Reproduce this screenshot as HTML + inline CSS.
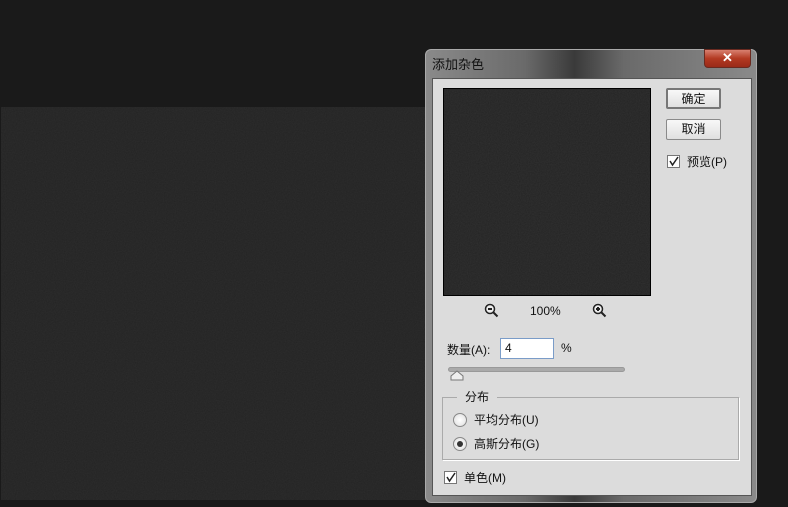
<!DOCTYPE html>
<html><head><meta charset="utf-8"><style>
*{margin:0;padding:0;box-sizing:border-box}
body{width:788px;height:507px;background:#1a1a1a;position:relative;overflow:hidden;font-family:"Liberation Sans","Noto Sans CJK SC",sans-serif;font-size:12px;color:#111}
.a{position:absolute}
.canvas{left:1px;top:107px;width:425px;height:393px;background:#232323}
.dlg{left:425px;top:49px;width:332px;height:454px;border-radius:6px;border:1px solid #aaa;background:linear-gradient(90deg,#8a8a8a,#6a6a6a 30%,#3a3a3a 45%,#6a6a6a 60%,#8a8a8a)}
.title{left:432px;top:54px;font-size:13px;color:#111}
.close{left:704px;top:49px;width:47px;height:19px;border-radius:0 0 4px 4px;background:linear-gradient(#d88070,#b33a22 50%,#9a2a18);border:1px solid #6a2a20;color:#fff;font-weight:bold;text-align:center;line-height:16px;font-size:13px}
.panel{left:432px;top:78px;width:320px;height:418px;background:#dcdcdc;border:1px solid #555}
.prev{left:443px;top:88px;width:208px;height:208px;background:#232323;border:1px solid #000}
.btn{width:55px;height:21px;background:linear-gradient(#f8f8f8,#e0e0e0);border:1px solid #8a8a8a;border-radius:2px;text-align:center;line-height:19px;font-size:12px}
.cb{width:13px;height:13px;border:1px solid #777;background:#fff}
.rd{width:14px;height:14px;border:1px solid #888;border-radius:50%;background:radial-gradient(#fff,#ddd)}
</style></head><body>
<div class="a canvas"><svg width="425" height="393"><filter id="n"><feTurbulence type="fractalNoise" baseFrequency="0.9" numOctaves="2"/><feColorMatrix type="matrix" values="0 0 0 0 0.2 0 0 0 0 0.2 0 0 0 0 0.2 0 0 0 0.5 0"/></filter><rect width="425" height="393" filter="url(#n)" opacity=".25"/></svg></div>
<div class="a dlg"></div>
<div class="a title">添加杂色</div>
<div class="a close">✕</div>
<div class="a panel"></div>
<div class="a prev"><svg width="206" height="206"><rect width="206" height="206" filter="url(#n)" opacity=".35"/></svg></div>
<div class="a btn" style="left:666px;top:88px;border:2px solid #777">确定</div>
<div class="a btn" style="left:666px;top:119px">取消</div>
<div class="a cb" style="left:667px;top:155px"><svg width="11" height="11"><path d="M2 5 L4.5 9 L10 1" stroke="#222" stroke-width="1.5" fill="none"/></svg></div>
<div class="a" style="left:687px;top:153px">预览(P)</div>
<svg class="a" style="left:484px;top:303px" width="16" height="16"><circle cx="6" cy="6" r="4.5" stroke="#222" stroke-width="1.5" fill="#eee"/><path d="M4 6h4M9.5 9.5l4 4" stroke="#222" stroke-width="2"/></svg>
<div class="a" style="left:530px;top:304px">100%</div>
<svg class="a" style="left:592px;top:303px" width="16" height="16"><circle cx="6" cy="6" r="4.5" stroke="#222" stroke-width="1.5" fill="#eee"/><path d="M4 6h4M6 4v4M9.5 9.5l4 4" stroke="#222" stroke-width="2"/></svg>
<div class="a" style="left:447px;top:341px">数量(A):</div>
<div class="a" style="left:500px;top:338px;width:54px;height:21px;background:#fff;border:1px solid #7a9cc8;padding:2px 4px">4</div>
<div class="a" style="left:561px;top:341px">%</div>
<div class="a" style="left:448px;top:367px;width:177px;height:5px;border-radius:3px;background:#aaa;border:1px solid #999"></div>
<svg class="a" style="left:450px;top:370px" width="14" height="11"><path d="M1 10 L1 6 L7 1 L13 6 L13 10 Z" fill="#eee" stroke="#777"/></svg>
<div class="a" style="left:442px;top:397px;width:297px;height:63px;border:1px solid #aaa;box-shadow:1px 1px 0 #fff"></div>
<div class="a" style="left:457px;top:388px;background:#dcdcdc;padding:0 8px">分布</div>
<div class="a rd" style="left:453px;top:413px"></div>
<div class="a" style="left:474px;top:411px">平均分布(U)</div>
<div class="a rd" style="left:453px;top:437px"><div style="width:6px;height:6px;border-radius:50%;background:#333;margin:3px"></div></div>
<div class="a" style="left:474px;top:435px">高斯分布(G)</div>
<div class="a cb" style="left:444px;top:471px"><svg width="11" height="11"><path d="M2 5 L4.5 9 L10 1" stroke="#222" stroke-width="1.5" fill="none"/></svg></div>
<div class="a" style="left:464px;top:469px">单色(M)</div>
</body></html>
